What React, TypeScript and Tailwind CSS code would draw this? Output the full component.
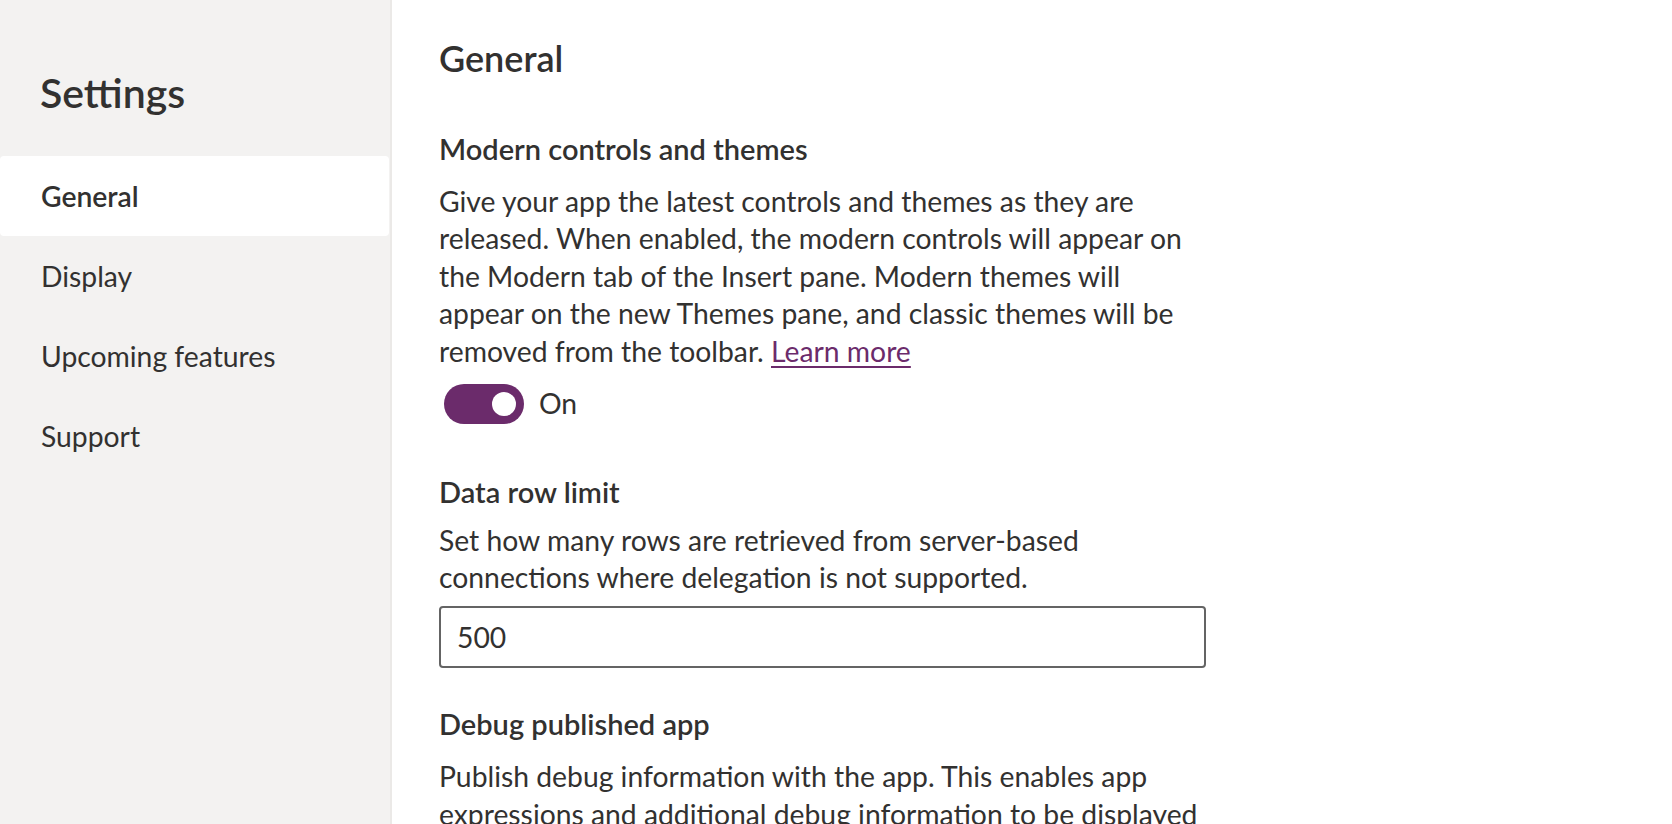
import React, { useState } from 'react';

const NAV_ITEMS = ['General', 'Display', 'Upcoming features', 'Support'];

export default function App() {
  const [active, setActive] = useState('General');
  const [modern, setModern] = useState(true);
  const [rowLimit, setRowLimit] = useState('500');

  return (
    <div className="flex h-screen w-full overflow-hidden bg-white font-[Lato,'Liberation_Sans',sans-serif] text-[#323130]">
      {/* Sidebar */}
      <aside className="w-[392px] shrink-0 bg-[#f3f2f1] border-r-2 border-[#ebe9e7]">
        <h1 className="pl-[40px] pt-[67px] text-[41px] leading-[52px] font-semibold">Settings</h1>
        <nav className="mt-[37px] flex flex-col">
          {NAV_ITEMS.map((item) => (
            <button
              key={item}
              type="button"
              onClick={() => setActive(item)}
              className={`flex h-[80px] w-[389px] items-center rounded-[4px] pl-[41px] text-left text-[28.3px] ${
                active === item ? 'bg-white font-semibold' : 'font-normal'
              }`}
            >
              {item}
            </button>
          ))}
        </nav>
      </aside>

      {/* Content */}
      <main className="flex-1 pl-[47px] pt-[34px]">
        <div className="w-[767px]">
          <h2 className="text-[36px] leading-[48px] font-semibold">General</h2>

          {/* Modern controls */}
          <section className="mt-[48px]">
            <h3 className="text-[29px] leading-[37.5px] font-semibold">Modern controls and themes</h3>
            <p className="mt-[15px] whitespace-nowrap text-[28.3px] leading-[37.5px]">
              Give your app the latest controls and themes as they are
              <br />
              released. When enabled, the modern controls will appear on
              <br />
              the Modern tab of the Insert pane. Modern themes will
              <br />
              appear on the new Themes pane, and classic themes will be
              <br />
              removed from the toolbar.{' '}
              <a href="#" className="text-[#6b2b6b] underline underline-offset-[4px]">
                Learn more
              </a>
            </p>
            <div className="mt-[14px] ml-[5px] flex items-center gap-[15px]">
              <button
                type="button"
                role="switch"
                aria-checked={modern}
                onClick={() => setModern(!modern)}
                className={`flex h-[40px] w-[80px] items-center rounded-full px-[8px] ${
                  modern ? 'justify-end bg-[#6b2b6b]' : 'justify-start border-2 border-[#605e5c] bg-white'
                }`}
              >
                <span className={`h-[24px] w-[24px] rounded-full ${modern ? 'bg-white' : 'bg-[#605e5c]'}`} />
              </button>
              <span className="text-[28.3px] leading-[37.5px]">{modern ? 'On' : 'Off'}</span>
            </div>
          </section>

          {/* Data row limit */}
          <section className="mt-[49px]">
            <h3 className="text-[29px] leading-[37.5px] font-semibold">Data row limit</h3>
            <p className="mt-[11px] whitespace-nowrap text-[28.3px] leading-[37.5px]">
              Set how many rows are retrieved from server-based
              <br />
              connections where delegation is not supported.
            </p>
            <input
              type="text"
              value={rowLimit}
              onChange={(e) => setRowLimit(e.target.value)}
              className="mt-[9px] h-[62px] w-full rounded-[4px] border-2 border-[#646464] px-[16px] text-[28.3px] outline-none"
            />
          </section>

          {/* Debug published app */}
          <section className="mt-[37px]">
            <h3 className="text-[29px] leading-[37.5px] font-semibold">Debug published app</h3>
            <p className="mt-[16px] whitespace-nowrap text-[28.3px] leading-[37.5px]">
              Publish debug information with the app. This enables app
              <br />
              expressions and additional debug information to be displayed
            </p>
          </section>
        </div>
      </main>
    </div>
  );
}
